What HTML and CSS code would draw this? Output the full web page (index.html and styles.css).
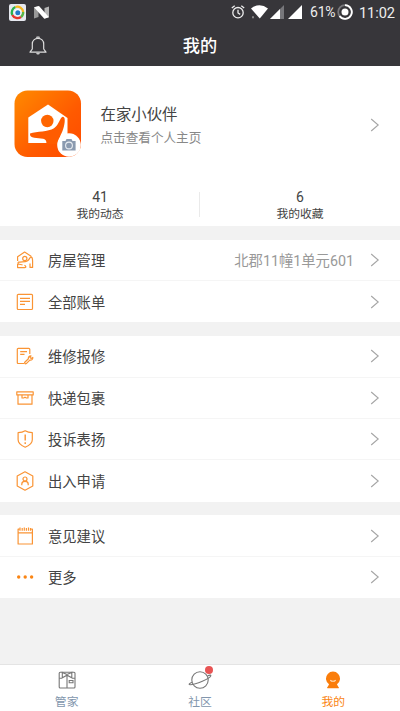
FILE: index.html
```html
<!DOCTYPE html>
<html lang="zh-CN">
<head>
<meta charset="utf-8">
<title>我的</title>
<link rel="stylesheet" href="styles.css">
</head>
<body>
<svg width="0" height="0" class="defs"><defs>
<symbol id="chevron" viewBox="0 0 10 14"><path d="M1.2 1 8.2 7 1.2 13" fill="none" stroke="#a5a5a5" stroke-width="1.1"/></symbol>
</defs></svg>
<div class="screen">
<header class="top">
  <div class="status">
    <div class="status-left">
      <svg width="17" height="17" viewBox="0 0 17 17"><rect width="17" height="17" rx="2" fill="#e7e9f0"/><g fill="none" stroke-width="2.3"><path d="M3.3 11A5.9 5.9 0 0 1 6.5 3" stroke="#29b14c"/><path d="M6.5 3A5.9 5.9 0 0 1 14.2 8" stroke="#f5b81e"/><path d="M14.2 8A5.9 5.9 0 0 1 12 13" stroke="#59b646"/><path d="M12 13A5.9 5.9 0 0 1 3.3 11" stroke="#e6352b"/></g><circle cx="8.7" cy="8.5" r="3.3" fill="#fff"/><circle cx="8.8" cy="8.7" r="2.5" fill="#2479c9"/></svg>
      <svg width="15" height="13" viewBox="0 0 15 13"><path d="M0 1.5 4.5 0V11L0 12.5Z" fill="#999"/><path d="M10.5 2 15 .5V11L10.5 12.5Z" fill="#b5b5b5"/><path d="M0 1.2 5 0 15 11.3 10.3 12.8Z" fill="#fff"/></svg>
    </div>
    <div class="status-right">
      <svg class="alarm" width="14" height="14" viewBox="0 0 14 14" fill="none" stroke="#eee" stroke-width="1.3"><circle cx="7" cy="7.7" r="5.2"/><path d="M7 4.8V8l2.2 1.4M.8 3 3.7.8M13.2 3 10.3.8"/></svg>
      <svg class="wifi" width="17" height="14" viewBox="0 0 17 14"><path d="M0 3.6Q8.5-3.2 17 3.6L8.8 13.5Z" fill="#fff"/><path d="M1 11.2h2v2H1z" fill="#888"/></svg>
      <svg class="sig1" width="14" height="14" viewBox="0 0 14 14"><path d="M0 14 14 0V14Z" fill="#77777b"/><path d="M0 14 10 4V14Z" fill="#fff"/></svg>
      <svg class="sig2" width="14" height="14" viewBox="0 0 14 14"><path d="M0 14 14 0V14Z" fill="#fff"/></svg>
      <span class="percent">61%</span>
      <svg class="battery" width="16" height="16" viewBox="0 0 16 16"><circle cx="8" cy="8" r="6.8" fill="none" stroke="#77777b" stroke-width="1.8"/><path d="M8 1.2A6.8 6.8 0 1 1 2.5 12" fill="none" stroke="#fff" stroke-width="1.8"/><circle cx="8" cy="8" r="3.5" fill="#fff"/></svg>
      <span class="time">11:02</span>
    </div>
  </div>
  <div class="titlebar">
    <svg class="bell" width="18" height="19" viewBox="0 0 18 19" fill="none" stroke="#ddd" stroke-width="1.2" stroke-linejoin="round"><path d="M1 16.2H17L14.7 13V8C14.7 4.6 12.2 2.4 9 2.4S3.3 4.6 3.3 8V13Z"/><path d="M7.9 2.3V1H10.1V2.3M7.8 16.8C8 18.3 10 18.3 10.2 16.8"/></svg>
    <h1>我的</h1>
  </div>
</header>
<section class="profile">
  <div class="person">
    <div class="avatar">
      <svg width="68" height="68" viewBox="0 0 68 68"><defs><linearGradient id="orange" x1="0" y1="0" x2="1" y2="1"><stop offset="0" stop-color="#ff8a00"/><stop offset=".6" stop-color="#ff5a00"/><stop offset="1" stop-color="#ff4a00"/></linearGradient></defs><rect x=".5" y=".5" width="66.5" height="66.5" rx="13" fill="url(#orange)"/><path d="M14.3 53V27.5L34 14.5 53.5 28V53Z" fill="#fff"/><circle cx="33.3" cy="31" r="6.2" fill="#ff6500"/><path d="M16 43.5C23 41 34 42 40 38.2 45 35 46 27 48.8 26.7 52.3 26.5 50.5 36 48.5 41 46.5 46 44.5 48 44.5 54H32.5C32.5 51 32 49.6 29 48.8 24 47.5 15 49 16 43.5Z" fill="#ff5c00"/></svg>
      <svg class="camera" width="24" height="24" viewBox="0 0 24 24"><circle cx="12" cy="12" r="11.8" fill="#fff"/><path d="M5.3 8H8.5L9.5 6H14.5L15.5 8H18.6V17.5H5.3Z" fill="#8b9bb0"/><circle cx="12" cy="12.5" r="3.4" fill="#8b9bb0" stroke="#e9edf2" stroke-width="1.1"/></svg>
    </div>
    <div class="who"><div class="name">在家小伙伴</div><div class="hint">点击查看个人主页</div></div>
    <svg class="chev" width="10" height="14"><use href="#chevron"/></svg>
  </div>
  <div class="stats">
    <div class="stat"><b>41</b><span>我的动态</span></div>
    <div class="stat"><b>6</b><span>我的收藏</span></div>
  </div>
</section>
<section class="group">
  <div class="row"><svg class="icon" viewBox="0 0 18 18"><path d="M1.6 10V5.8L8.6 1 15.4 5.4"/><circle cx="8.8" cy="7.4" r="2.1"/><path d="M2.2 11.2C6 10.6 9 11.2 11.2 10 14 8.4 13.4 6.2 15 6.2S16.6 8 16.6 10V16.4H14V12.5M2.2 11.2C1 13.5 4 13.2 6.5 13.8M1.6 13V16.6H8.8C10.4 16.5 10 14.8 8.4 14.2"/></svg><span class="label">房屋管理</span><span class="value">北郡11幢1单元601</span><svg class="chev" width="10" height="14"><use href="#chevron"/></svg></div>
  <div class="row"><svg class="icon" viewBox="0 0 18 18"><rect x="1.3" y="1.3" width="15.2" height="15.2" rx="1"/><path d="M4 5.4H14M4 8.4H14M4 11.4H9"/></svg><span class="label">全部账单</span><svg class="chev" width="10" height="14"><use href="#chevron"/></svg></div>
</section>
<section class="group">
  <div class="row"><svg class="icon" viewBox="0 0 18 18"><path d="M8 16.5H2.3Q1.3 16.5 1.3 15.5V2.3Q1.3 1.3 2.3 1.3H12.8Q13.8 1.3 13.8 2.3V7M4.2 4.6H11M4.2 7.3H8.5"/><path d="M8.8 15.2 12.4 11.8C12 10 13.2 8.7 15 8.8L13.9 10.3 15 11.4 16.8 10.4C17 12.4 15.6 13.5 13.8 13.1L10.3 16.6C9.2 17.3 8.1 16.2 8.8 15.2Z"/></svg><span class="label">维修报修</span><svg class="chev" width="10" height="14"><use href="#chevron"/></svg></div>
  <div class="row"><svg class="icon" viewBox="0 0 18 18"><path d="M.8 2.9H17.2V5.9H.8ZM2 5.9V15.2H16V5.9M6 5.9V9H7.6L9 8.2 10.4 9H12V5.9"/></svg><span class="label">快递包裹</span><svg class="chev" width="10" height="14"><use href="#chevron"/></svg></div>
  <div class="row"><svg class="icon" viewBox="0 0 18 18"><path d="M9.2.8C11 2 13.5 2.7 16.3 2.7V9.8C16.3 13.3 13.5 15.5 9.2 17.2 4.9 15.5 2.1 13.3 2.1 9.8V2.7C5 2.7 7.4 2 9.2.8Z"/><path d="M9.2 4.6V10.6M9.2 12.2V14" stroke-width="1.4"/></svg><span class="label">投诉表扬</span><svg class="chev" width="10" height="14"><use href="#chevron"/></svg></div>
  <div class="row"><svg class="icon tall" viewBox="0 0 18 20"><path d="M9 .8 16.8 5V15L9 19.2 1.2 15V5Z"/><circle cx="9" cy="8" r="2"/><path d="M5.8 14.3V13C5.8 9.6 12.2 9.6 12.2 13V14.3"/></svg><span class="label">出入申请</span><svg class="chev" width="10" height="14"><use href="#chevron"/></svg></div>
</section>
<section class="group">
  <div class="row"><svg class="icon" viewBox="0 0 18 18"><path d="M3.3 2.2H2.1V17H16.4V2.2H15.2M2.1 5.8H16.4M4 .5V3.7M6.2 1V3.7M8.3.5V3.7M10.4 1V3.7M12.5.5V3.7M14.5 1V3.7"/></svg><span class="label">意见建议</span><svg class="chev" width="10" height="14"><use href="#chevron"/></svg></div>
  <div class="row"><svg class="icon dots" viewBox="0 0 18 18"><circle cx="2.7" cy="9" r="1.7"/><circle cx="9.2" cy="9" r="1.7"/><circle cx="15.6" cy="9" r="1.7"/></svg><span class="label">更多</span><svg class="chev" width="10" height="14"><use href="#chevron"/></svg></div>
</section>
<nav class="tabs">
  <div class="tab"><svg width="24" height="20" viewBox="0 0 24 20" fill="none" stroke="#777" stroke-width="1.1"><rect x="4.2" y="2.2" width="15.8" height="15.8" rx="1"/><path d="M12 6V18M12 4.5 7.3 2.4V7.8L12 5.2 16.8 7.8V2.4ZM4.2 8.2H7.5M16.8 8.2H20M14.2 10.5H18V12.8H14.2Z"/></svg><span>管家</span></div>
  <div class="tab"><svg width="24" height="20" viewBox="0 0 24 20" fill="none" stroke="#777" stroke-width="1.1"><circle cx="12" cy="10" r="8.2"/><path d="M4.1 12.2C1.2 13.5.3 14.6 2 14.7 8 14.8 22 8.4 22.8 5.8 23 4.8 21.7 5 19.5 5.8"/></svg><i class="badge"></i><span>社区</span></div>
  <div class="tab active"><svg width="24" height="20" viewBox="0 0 24 20"><path d="M8 14.3A7 7 0 1 1 16 14.3C16.3 15.3 17 16.3 18 17.8Q18 18.2 17.5 18.2H6.5Q6 18.2 6 17.8C7 16.3 7.7 15.3 8 14.3Z" fill="#fa7d0b"/><path d="M9.3 10.2Q12 12.3 14.7 10.2" fill="none" stroke="#ffe1bf" stroke-width="1.1"/></svg><span>我的</span></div>
</nav>
</div>
</body>
</html>
```

FILE: styles.css
```css
* { box-sizing: border-box; }
body { margin: 0; background: #f2f2f2; color: #444; font-family: Roboto, "Noto Sans CJK SC", sans-serif; }
.defs { display: none; }
.screen { height: 711px; display: flex; flex-direction: column; overflow: hidden; }
svg { display: block; flex: none; }
.top { height: 66px; flex: none; background: #37363a; color: #fff; }
.status { height: 24px; display: flex; justify-content: space-between; padding: 0 5px 0 9px; }
.status-left, .status-right { display: flex; align-items: center; }
.status-left { gap: 8px; }
.status-right { color: #eee; font-size: 14px; line-height: 24px; }
.alarm { margin-right: 6px; }
.wifi { margin-right: 2px; }
.sig1 { margin-right: 4px; }
.sig2 { margin-right: 8px; }
.percent { width: 26px; letter-spacing: -.2px; }
.battery { margin: 0 6px 0 1px; }
.time { width: 36px; font-size: 14.6px; padding-top: 2px; letter-spacing: -.1px; }
.titlebar { height: 42px; display: grid; grid-template-columns: 60px 1fr 60px; align-items: center; }
.bell { margin: 0 0 0 29px; }
h1 { margin: 0; padding-top: 1px; text-align: center; font-size: 17.2px; font-weight: 500; line-height: 24px; }
.profile { height: 160px; flex: none; background: #fff; }
.person { height: 118px; padding: 0 20px 0 14px; display: flex; align-items: center; }
.avatar { position: relative; width: 68px; height: 68px; margin-top: -2px; }
.camera { position: absolute; right: 1px; bottom: 1px; }
.who { flex: 1; margin-left: 18.5px; padding-top: 1px; }
.name { font-size: 15.4px; line-height: 24px; }
.hint { font-size: 12.6px; line-height: 22px; color: #888; }
.stats { height: 42px; display: flex; padding-top: 4px; }
.stat { width: 50%; display: flex; flex-direction: column; align-items: center; position: relative; }
.stat + .stat::before { content: ""; width: 1px; height: 25px; position: absolute; left: -1px; top: 4px; background: #eaeaea; }
.stat b { font-weight: 400; font-size: 14px; line-height: 18px; }
.stat span { font-size: 11.8px; line-height: 16px; }
.group { flex: none; margin-top: 13.7px; background: #fff; }
.row { height: 41.4px; padding: 0 20px 0 16px; display: flex; align-items: center; border-bottom: 1px solid #f5f5f5; }
.row:last-child { border-bottom: 0; }
.icon { width: 18px; height: 18px; fill: none; stroke: #fa9434; stroke-width: 1.2; stroke-linejoin: round; }
.icon.tall { height: 20px; }
.icon.dots { fill: #fa8514; stroke: none; }
.label { margin-left: 14px; flex: 1; padding-top: 2px; font-size: 14.3px; line-height: 20px; }
.value { font-size: 14.3px; color: #999; margin-right: 16px; }
.tabs { height: 47px; flex: none; margin-top: auto; border-top: 1px solid #e4e4e4; background: #fff; display: flex; }
.tab { flex: 1; display: flex; flex-direction: column; align-items: center; padding-top: 5px; font-size: 11.8px; line-height: 18px; color: #8296ad; position: relative; }
.tab span { margin-top: 3px; }
.tab.active { color: #fa8514; }
.badge { position: absolute; width: 8px; height: 8px; border-radius: 50%; background: #e85454; left: calc(50% + 5px); top: 1px; }
```
